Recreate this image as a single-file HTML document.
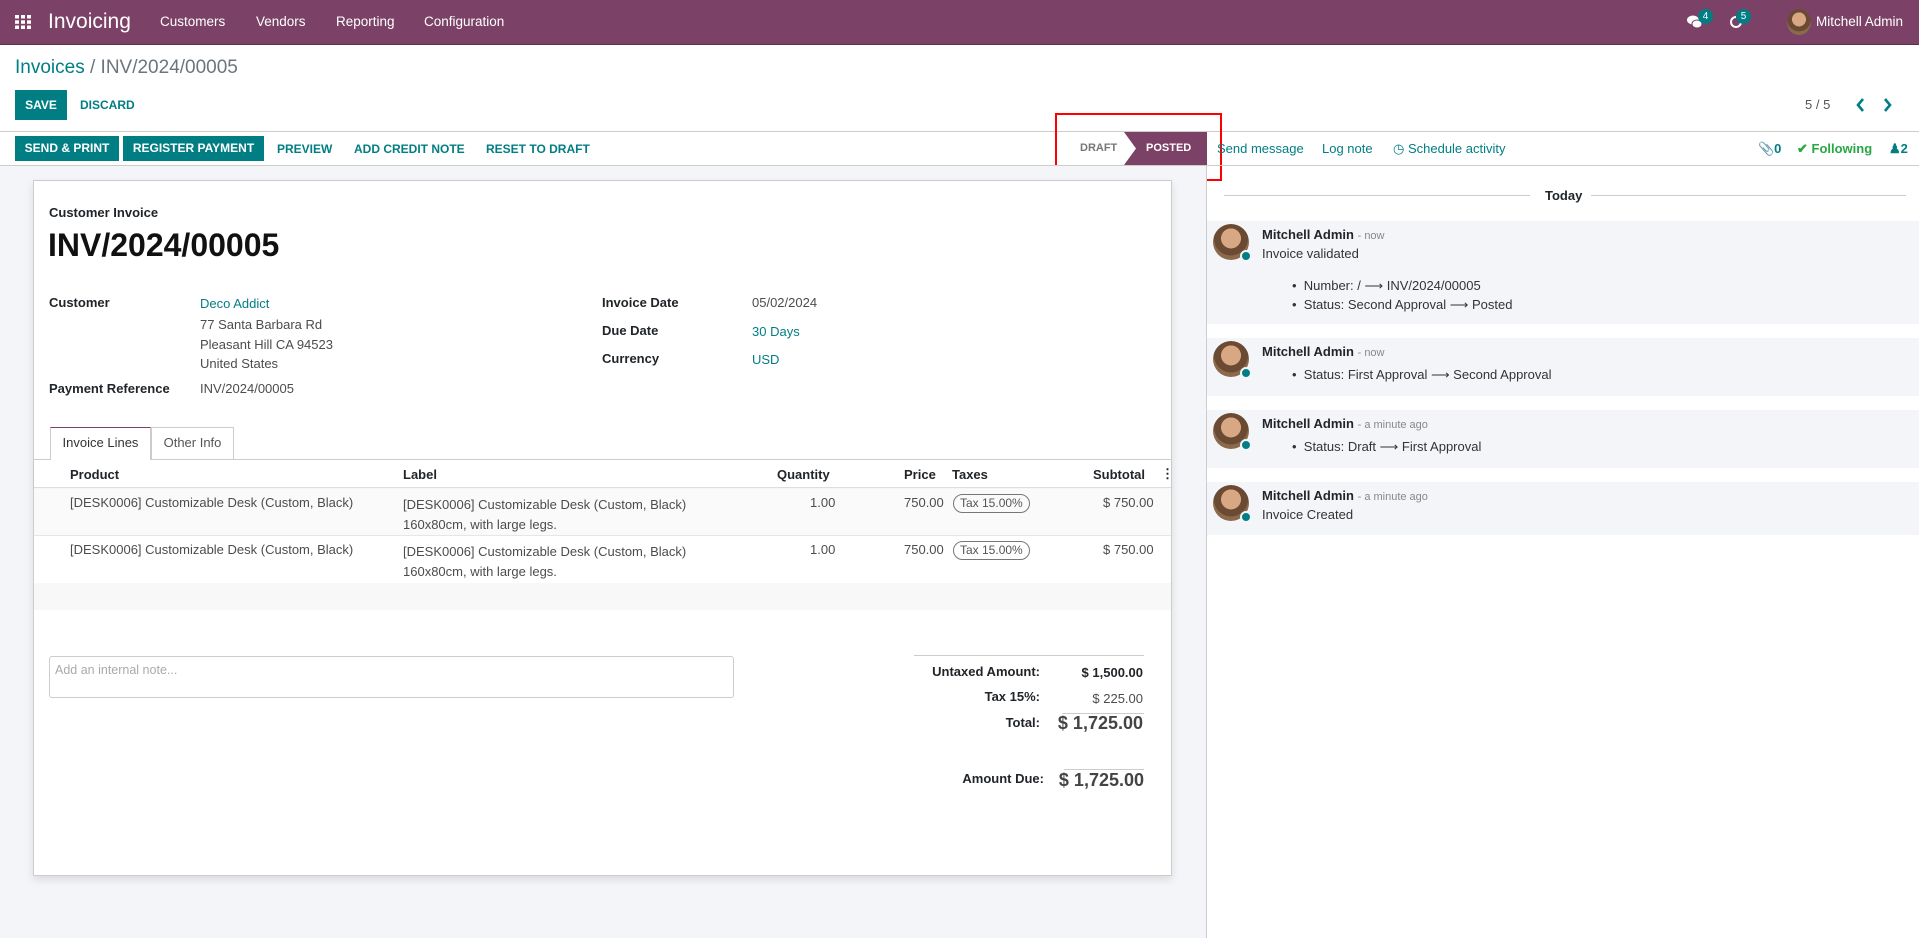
<!DOCTYPE html>
<html><head><meta charset="utf-8">
<style>
*{box-sizing:border-box;margin:0;padding:0}
body{width:1919px;height:938px;overflow:hidden;font-family:"Liberation Sans",sans-serif;font-size:13px;color:#4c4c4c;background:#fff;position:relative}
.a{position:absolute;white-space:nowrap}
.nav{left:0;top:0;width:1919px;height:45px;background:#7b4166;border-bottom:1px solid #5d2f4c}
.nav .a{color:#fff}
.teal{color:#017e84}
.btn{position:absolute;background:#017e84;color:#fff;font-weight:bold;font-size:12px;text-align:center;line-height:30px}
.lb{font-weight:bold;color:#212529}
.b{font-weight:bold}
.up{font-size:12px}
.msg{position:absolute;left:1207px;width:712px;background:#f4f5f8}
.av{position:absolute;left:6px;width:36px;height:36px;border-radius:50%;background:radial-gradient(circle at 50% 40%,#d8a784 0 35%,#6b4a34 36% 60%,#8a6a4b 61%)}
.av i{position:absolute;right:-3px;bottom:-2px;width:12px;height:12px;border-radius:50%;background:#017e84;border:2px solid #f4f5f8}
.tax{position:absolute;border:1px solid #777;border-radius:10px;height:19px;line-height:17px;padding:0 6px;font-size:12px;color:#555}
</style></head><body>
<div class="a nav">
  <svg class="a" style="left:15px;top:15px" width="16" height="14" viewBox="0 0 16 14"><g fill="#fff"><rect x="0" y="0" width="4" height="3.5"/><rect x="6" y="0" width="4" height="3.5"/><rect x="12" y="0" width="4" height="3.5"/><rect x="0" y="5.3" width="4" height="3.5"/><rect x="6" y="5.3" width="4" height="3.5"/><rect x="12" y="5.3" width="4" height="3.5"/><rect x="0" y="10.5" width="4" height="3.5"/><rect x="6" y="10.5" width="4" height="3.5"/><rect x="12" y="10.5" width="4" height="3.5"/></g></svg>
  <div class="a" style="left:48px;top:10px;font-size:21px">Invoicing</div>
  <div class="a" style="left:160px;top:14px;font-size:13.5px">Customers</div>
  <div class="a" style="left:256px;top:14px;font-size:13.5px">Vendors</div>
  <div class="a" style="left:336px;top:14px;font-size:13.5px">Reporting</div>
  <div class="a" style="left:424px;top:14px;font-size:13.5px">Configuration</div>
  <svg class="a" style="left:1687px;top:15px" width="16" height="14" viewBox="0 0 16 14"><ellipse cx="6" cy="5" rx="6" ry="4.5" fill="#fff"/><ellipse cx="10" cy="9" rx="5" ry="4" fill="#fff" stroke="#7b4166"/></svg>
  <div class="a" style="left:1698px;top:9px;width:15px;height:15px;border-radius:50%;background:#017e84;font-size:10px;text-align:center;line-height:15px">4</div>
  <svg class="a" style="left:1729px;top:15px" width="14" height="14" viewBox="0 0 14 14"><path d="M12 7A5 5 0 1 1 7 2" fill="none" stroke="#fff" stroke-width="2"/></svg>
  <div class="a" style="left:1736px;top:9px;width:15px;height:15px;border-radius:50%;background:#017e84;font-size:10px;text-align:center;line-height:15px">5</div>
  <div class="a" style="left:1787px;top:9px;width:24px;height:26px;border-radius:50%;background:radial-gradient(circle at 50% 40%,#d8a784 0 35%,#6b4a34 36% 60%,#8a6a4b 61%)"></div>
  <div class="a" style="left:1816px;top:14px;font-size:13.5px">Mitchell Admin</div>
</div>

<div class="a" style="left:15px;top:57px;font-size:19px;color:#6c757d"><span class="teal">Invoices</span> / INV/2024/00005</div>
<div class="btn" style="left:15px;top:90px;width:52px">SAVE</div>
<div class="a teal b up" style="left:80px;top:98px">DISCARD</div>
<div class="a" style="left:1805px;top:97px;color:#555">5 / 5</div>
<svg class="a" style="left:1855px;top:98px" width="10" height="14" viewBox="0 0 10 14"><path d="M8 1L3 7l5 6" fill="none" stroke="#017e84" stroke-width="2.6"/></svg>
<svg class="a" style="left:1883px;top:98px" width="10" height="14" viewBox="0 0 10 14"><path d="M2 1l5 6-5 6" fill="none" stroke="#017e84" stroke-width="2.6"/></svg>

<div class="a" style="left:0;top:131px;width:1919px;height:1px;background:#ccc"></div>
<div class="btn" style="left:15px;top:136px;width:104px;height:25px;line-height:25px">SEND &amp; PRINT</div>
<div class="btn" style="left:123px;top:136px;width:141px;height:25px;line-height:25px">REGISTER PAYMENT</div>
<div class="a teal b up" style="left:277px;top:142px">PREVIEW</div>
<div class="a teal b up" style="left:354px;top:142px">ADD CREDIT NOTE</div>
<div class="a teal b up" style="left:486px;top:142px">RESET TO DRAFT</div>
<div class="a" style="left:1080px;top:142px;font-size:11px;font-weight:bold;color:#777">DRAFT</div>
<svg class="a" style="left:1124px;top:132px" width="83" height="33"><path d="M0 0H83V33H0L12 16.5Z" fill="#7b4166"/></svg>
<div class="a" style="left:1146px;top:142px;font-size:11px;font-weight:bold;color:#fff">POSTED</div>
<div class="a" style="left:1055px;top:113px;width:167px;height:68px;border:2px solid #f00"></div>
<div class="a teal" style="left:1217px;top:141px">Send message</div>
<div class="a teal" style="left:1322px;top:141px">Log note</div>
<div class="a teal" style="left:1393px;top:141px">&#9719; Schedule activity</div>
<div class="a teal b" style="left:1758px;top:141px">&#128206;0</div>
<div class="a b" style="left:1797px;top:141px;color:#28a745">&#10004; Following</div>
<div class="a teal b" style="left:1889px;top:141px">&#9823;2</div>
<div class="a" style="left:0;top:165px;width:1919px;height:1px;background:#ccc"></div>

<div class="a" style="left:0;top:166px;width:1206px;height:772px;background:#f4f5f8"></div>
<div class="a" style="left:1206px;top:166px;width:1px;height:772px;background:#ccc"></div>
<div class="a" style="left:33px;top:180px;width:1139px;height:696px;background:#fff;border:1px solid #ccc;box-shadow:0 4px 8px rgba(0,0,0,.1)"></div>

<div class="a lb" style="left:49px;top:205px">Customer Invoice</div>
<div class="a b" style="left:48px;top:227px;font-size:32px;color:#111">INV/2024/00005</div>
<div class="a lb" style="left:49px;top:295px">Customer</div>
<div class="a teal" style="left:200px;top:296px">Deco Addict</div>
<div class="a" style="left:200px;top:317px">77 Santa Barbara Rd</div>
<div class="a" style="left:200px;top:337px">Pleasant Hill CA 94523</div>
<div class="a" style="left:200px;top:356px">United States</div>
<div class="a lb" style="left:49px;top:381px">Payment Reference</div>
<div class="a" style="left:200px;top:381px">INV/2024/00005</div>
<div class="a lb" style="left:602px;top:295px">Invoice Date</div>
<div class="a" style="left:752px;top:295px">05/02/2024</div>
<div class="a lb" style="left:602px;top:323px">Due Date</div>
<div class="a teal" style="left:752px;top:324px">30 Days</div>
<div class="a lb" style="left:602px;top:351px">Currency</div>
<div class="a teal" style="left:752px;top:352px">USD</div>

<div class="a" style="left:33px;top:459px;width:1139px;height:1px;background:#ccc"></div>
<div class="a" style="left:50px;top:427px;width:101px;height:33px;background:#fff;border:1px solid #ccc;border-top:1px solid #7b4166;border-bottom:none;text-align:center;line-height:30px;color:#333">Invoice Lines</div>
<div class="a" style="left:151px;top:427px;width:83px;height:32px;border:1px solid #ccc;border-bottom:none;text-align:center;line-height:30px;color:#555">Other Info</div>
<div class="a" style="left:34px;top:460px;width:1137px;height:28px;border-bottom:1px solid #ddd;box-shadow:0 1px 2px rgba(0,0,0,.06)"></div>
<div class="a lb" style="left:70px;top:467px">Product</div>
<div class="a lb" style="left:403px;top:467px">Label</div>
<div class="a lb" style="left:777px;top:467px">Quantity</div>
<div class="a lb" style="left:904px;top:467px">Price</div>
<div class="a lb" style="left:952px;top:467px">Taxes</div>
<div class="a lb" style="left:1093px;top:467px">Subtotal</div>
<div class="a lb" style="left:1161px;top:466px">&#8942;</div>

<div class="a" style="left:34px;top:489px;width:1137px;height:47px;background:#fafafa;border-bottom:1px solid #e6e6e6"></div>
<div class="a" style="left:70px;top:495px">[DESK0006] Customizable Desk (Custom, Black)</div>
<div class="a" style="left:403px;top:495px;line-height:20px">[DESK0006] Customizable Desk (Custom, Black)<br>160x80cm, with large legs.</div>
<div class="a" style="left:810px;top:495px">1.00</div>
<div class="a" style="left:904px;top:495px">750.00</div>
<div class="tax" style="left:953px;top:494px">Tax 15.00%</div>
<div class="a" style="left:1103px;top:495px">$ 750.00</div>
<div class="a" style="left:70px;top:542px">[DESK0006] Customizable Desk (Custom, Black)</div>
<div class="a" style="left:403px;top:542px;line-height:20px">[DESK0006] Customizable Desk (Custom, Black)<br>160x80cm, with large legs.</div>
<div class="a" style="left:810px;top:542px">1.00</div>
<div class="a" style="left:904px;top:542px">750.00</div>
<div class="tax" style="left:953px;top:541px">Tax 15.00%</div>
<div class="a" style="left:1103px;top:542px">$ 750.00</div>
<div class="a" style="left:34px;top:583px;width:1137px;height:27px;background:#f8f8f8"></div>

<div class="a" style="left:49px;top:656px;width:685px;height:42px;border:1px solid #ccc;border-radius:3px"></div>
<div class="a" style="left:55px;top:663px;color:#aaa;font-size:12.5px">Add an internal note...</div>
<div class="a" style="left:914px;top:655px;width:230px;height:1px;background:#ccc"></div>
<div class="a lb" style="left:900px;top:664px;width:140px;text-align:right">Untaxed Amount:</div>
<div class="a lb" style="left:1040px;top:665px;width:103px;text-align:right">$ 1,500.00</div>
<div class="a lb" style="left:900px;top:689px;width:140px;text-align:right">Tax 15%:</div>
<div class="a" style="left:1040px;top:691px;width:103px;text-align:right">$ 225.00</div>
<div class="a" style="left:1062px;top:713px;width:82px;height:1px;background:#ccc"></div>
<div class="a lb" style="left:900px;top:715px;width:140px;text-align:right">Total:</div>
<div class="a b" style="left:1000px;top:713px;width:143px;text-align:right;font-size:18px;color:#444">$ 1,725.00</div>
<div class="a" style="left:1064px;top:769px;width:80px;height:1px;background:#ccc"></div>
<div class="a lb" style="left:900px;top:771px;width:144px;text-align:right">Amount Due:</div>
<div class="a b" style="left:1000px;top:770px;width:144px;text-align:right;font-size:18px;color:#444">$ 1,725.00</div>

<div class="a" style="left:1224px;top:195px;width:306px;height:1px;background:#ccc"></div>
<div class="a" style="left:1591px;top:195px;width:315px;height:1px;background:#ccc"></div>
<div class="a lb" style="left:1545px;top:188px">Today</div>

<div class="msg" style="top:221px;height:103px"><div class="av" style="top:3px"><i></i></div>
<div class="a" style="left:55px;top:6px"><span class="lb">Mitchell Admin</span> <span style="font-size:11px;color:#888">- now</span></div>
<div class="a" style="left:55px;top:25px;color:#333">Invoice validated</div>
<div class="a" style="left:85px;top:55px;color:#333;line-height:19px">&bull;&nbsp;&nbsp;Number: / &#10230; INV/2024/00005<br>&bull;&nbsp;&nbsp;Status: Second Approval &#10230; Posted</div></div>
<div class="msg" style="top:338px;height:58px"><div class="av" style="top:3px"><i></i></div>
<div class="a" style="left:55px;top:6px"><span class="lb">Mitchell Admin</span> <span style="font-size:11px;color:#888">- now</span></div>
<div class="a" style="left:85px;top:29px;color:#333">&bull;&nbsp;&nbsp;Status: First Approval &#10230; Second Approval</div></div>
<div class="msg" style="top:410px;height:58px"><div class="av" style="top:3px"><i></i></div>
<div class="a" style="left:55px;top:6px"><span class="lb">Mitchell Admin</span> <span style="font-size:11px;color:#888">- a minute ago</span></div>
<div class="a" style="left:85px;top:29px;color:#333">&bull;&nbsp;&nbsp;Status: Draft &#10230; First Approval</div></div>
<div class="msg" style="top:482px;height:53px"><div class="av" style="top:3px"><i></i></div>
<div class="a" style="left:55px;top:6px"><span class="lb">Mitchell Admin</span> <span style="font-size:11px;color:#888">- a minute ago</span></div>
<div class="a" style="left:55px;top:25px;color:#333">Invoice Created</div></div>
</body></html>
